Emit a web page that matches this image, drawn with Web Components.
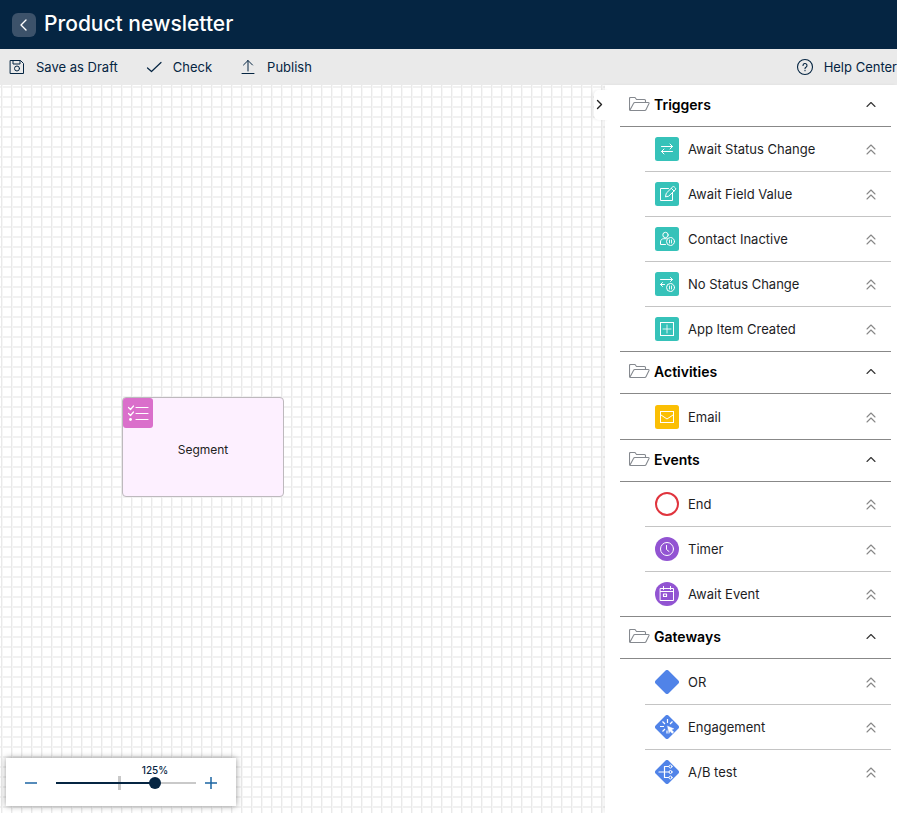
<!DOCTYPE html>
<html lang="en">
<head>
<meta charset="utf-8">
<title>Product newsletter</title>
<style>
html,body{height:100%}
body{margin:0;font:14px/20px Inter,"Liberation Sans",sans-serif;color:#1d1d1f;overflow:hidden}
</style>
</head>
<body>
<journey-editor>
  <title-bar slot="top">Product newsletter</title-bar>
  <tool-bar slot="top">
    <tool-button icon="save">Save as Draft</tool-button>
    <tool-button icon="check">Check</tool-button>
    <tool-button icon="publish">Publish</tool-button>
    <tool-button icon="help" slot="end">Help Center</tool-button>
  </tool-bar>
  <flow-canvas slot="canvas">
    <flow-node style="left:122px;top:312px">Segment</flow-node>
    <zoom-control slot="tools"></zoom-control>
  </flow-canvas>
  <side-panel slot="panel">
    <palette-group label="Triggers">
      <palette-item icon="status">Await Status Change</palette-item>
      <palette-item icon="field">Await Field Value</palette-item>
      <palette-item icon="inactive">Contact Inactive</palette-item>
      <palette-item icon="nostatus">No Status Change</palette-item>
      <palette-item icon="created">App Item Created</palette-item>
    </palette-group>
    <palette-group label="Activities" roomy>
      <palette-item icon="email">Email</palette-item>
    </palette-group>
    <palette-group label="Events">
      <palette-item icon="end">End</palette-item>
      <palette-item icon="timer">Timer</palette-item>
      <palette-item icon="event">Await Event</palette-item>
    </palette-group>
    <palette-group label="Gateways" roomy>
      <palette-item icon="or">OR</palette-item>
      <palette-item icon="engagement">Engagement</palette-item>
      <palette-item icon="ab">A/B test</palette-item>
    </palette-group>
  </side-panel>
</journey-editor>
<script>
const svg = (w, h, body, extra = '') =>
  `<svg width="${w}" height="${h}" viewBox="0 0 ${w} ${h}" fill="none" stroke-linecap="round" stroke-linejoin="round" aria-hidden="true" ${extra}>${body}</svg>`;

const tile = (fill, body) => svg(24, 24, `<rect width="24" height="24" rx="2.5" fill="${fill}"/><g stroke="#fff">${body}</g>`);
const disc = body => svg(24, 24, `<circle cx="12" cy="12" r="12" fill="#9254d2"/><g stroke="#fff">${body}</g>`);
const diamond = body => svg(24, 24, `<path d="M10.300.8a2.400 2.400 0 0 1 3.400 0l9.500 9.500a2.400 2.400 0 0 1 0 3.400l-9.500 9.500a2.400 2.400 0 0 1-3.400 0L.8 13.700a2.400 2.400 0 0 1 0-3.400z" fill="#5083e8"/><g stroke="#fff">${body}</g>`);
const TEAL = '#36c2b9';

const itemIcons = {
  status: tile(TEAL, '<path d="M6.500 9.500h11M15 7l2.500 2.500L15 12M17.500 14.500h-11M9 12l-2.500 2.500L9 17"/>'),
  field: tile(TEAL, '<path d="M13.500 6.500h-8v12h12v-7.500M10.500 14.500l.8-3.300 6.200-6.200a1.300 1.300 0 0 1 1.900 0l.9.9a1.300 1.300 0 0 1 0 1.900l-6.300 6.100zM16.500 6.500l2.500 2.500"/>'),
  inactive: tile(TEAL, '<circle cx="10.500" cy="8" r="2.700"/><path d="M10.500 17.500h-5v-2.500c0-2 1.300-3.300 3.300-3.300h2.500"/><circle cx="15.500" cy="14.500" r="4"/><path d="M14.500 13v3M16.500 13v3" stroke-width=".9"/>'),
  nostatus: tile(TEAL, '<path d="M5.500 7.500h12M15.500 5.500l2 2-2 2M9.500 12.500h-4M7.500 10.500l-2 2 2 2"/><circle cx="15.500" cy="15.500" r="4"/><path d="M14.500 14v3M16.500 14v3" stroke-width=".9"/>'),
  created: tile(TEAL, '<rect x="5.500" y="5.500" width="13" height="13" stroke-linejoin="miter"/><path d="M12 8v8M8 12h8" opacity=".8"/>'),
  email: tile('#fbbf04', '<rect x="5.500" y="6.500" width="13" height="11" stroke-linejoin="miter"/><path d="M6 10l6 4 6-4"/>'),
  end: svg(24, 24, '<circle cx="12" cy="12" r="11" stroke="#e0343d" stroke-width="2"/>'),
  timer: disc('<circle cx="12" cy="12" r="6.500"/><path d="M11.500 8.500v4l2.500 2"/>'),
  event: disc('<path d="M5.500 6.500h13v12h-13zM5.500 9.500h13M8.500 4.500v3M15.500 4.500v3" stroke-linejoin="miter"/><path d="M8.500 12h3v2.500h-3z" stroke-width="1.200"/>'),
  or: diamond(''),
  engagement: diamond('<path d="M12.500 4v4M7.500 6.500l2.500 2.500M5 11.500h4M7.500 16.500l2.500-2.500M17.500 6.500L15 9M12 15.500v3" stroke-linecap="butt" stroke-width="1.200"/><path d="M12.500 11l6.500 2.800-2.400 1 2.200 2.300-1.600 1.500-2.200-2.400-1 2.200z" fill="#fff" stroke-width=".3"/>'),
  ab: diamond('<path d="M4 12h10M13.500 6.500H9.500v11h4" stroke-width="1.200"/><circle cx="15.500" cy="6.500" r="1.500"/><circle cx="15.500" cy="12" r="1.500"/><circle cx="15.500" cy="17.500" r="1.500"/>')
};

const toolIcons = {
  save: svg(20, 20, '<path d="M3.500 3.500h10l3 3v10h-13zM6 3.500v3.500h7v-3.500"/><circle cx="10" cy="11.500" r="2.500"/>'),
  check: svg(20, 20, '<path d="M3.500 11l4 3.500 9.500-9"/>', 'stroke-width="1.200"'),
  publish: svg(20, 20, '<path d="M10 14V3.500M5.500 8L10 3.500 14.500 8M4 16.500h12"/>'),
  help: svg(20, 20, '<circle cx="10" cy="10" r="7.500"/><path d="M8 8.500a2 2 0 1 1 3 1.700c-.7.400-1 .7-1 1.400M10 13.300v.4"/>', 'stroke-width="1.100"')
};

class Part extends HTMLElement {
  connectedCallback() {
    if (this.shadowRoot) return;
    const root = this.attachShadow({mode: 'open'});
    root.innerHTML = `<style>*{box-sizing:border-box}button{font:inherit;color:inherit;background:none;border:0;padding:0;margin:0;cursor:pointer}svg{display:block;flex:none}${this.css()}</style>${this.html()}`;
  }
}

customElements.define('journey-editor', class extends Part {
  css() { return `:host{display:flex;flex-direction:column;height:100vh}
    main{flex:1;min-height:0;display:flex}`; }
  html() { return `<slot name="top"></slot><main><slot name="canvas"></slot><slot name="panel"></slot></main>`; }
});

customElements.define('title-bar', class extends Part {
  css() { return `:host{display:block;flex:none;background:#052542;color:#fff}
    header{display:flex;align-items:center;gap:8px;padding:0 12px;height:49px}
    button{width:24px;height:24px;border-radius:6px;background:#3c526a}
    h1{margin:0;padding-bottom:1px;font-size:21px;line-height:28px;font-weight:500}`; }
  html() { return `<header><button aria-label="Back">${svg(24, 24, '<path d="M14 7L9 12l5 5" stroke="#fff" stroke-width="1.400"/>')}</button><h1><slot></slot></h1></header>`; }
});

customElements.define('tool-bar', class extends Part {
  css() { return `:host{display:block;flex:none;background:#eaeaea;color:#052542}
    nav{display:flex;justify-content:space-between;height:36px;padding-left:7px}
    div{display:flex;gap:26px}`; }
  html() { return `<nav aria-label="Actions"><div><slot></slot></div><slot name="end"></slot></nav>`; }
});

customElements.define('tool-button', class extends Part {
  css() { return `:host{display:flex;font-size:13px}
    button{display:flex;align-items:center;gap:9px;white-space:nowrap}
    svg{stroke:#052542}`; }
  html() { return `<button>${toolIcons[this.getAttribute('icon')]}<span><slot></slot></span></button>`; }
});

customElements.define('flow-canvas', class extends Part {
  css() { return `:host{display:block;flex:1;min-width:0;position:relative;overflow:hidden;
      background:linear-gradient(90deg,transparent 1px,#e9e9e9 1px 2px,#f6f6f6 2px 3px,transparent 3px) 0 0/10px 10px,linear-gradient(transparent 1px,#f1f1f1 1px 3px,transparent 3px) 0 0/10px 10px,#fff}
    .tools{position:absolute;left:6px;bottom:7px}`; }
  html() { return `<slot></slot><div class="tools"><slot name="tools"></slot></div>`; }
});

customElements.define('flow-node', class extends Part {
  css() { return `:host{position:absolute;width:162px;height:100px;display:flex;align-items:center;justify-content:center;
      box-sizing:border-box;padding-top:6px;border:1px solid #bdb9bd;border-radius:4px;background:#fdf0ff;font-size:12px;color:#222}
    svg{position:absolute;left:0;top:0}`; }
  html() { return svg(30, 30, '<rect width="30" height="30" rx="3" fill="#da6fcb"/><g stroke="#fff" stroke-width="1.200"><path d="M5.500 9.500l2 2 3-3.500M5.500 15.500l2 2 3-3.500M13 9.500h12M13 15.500h12M13 21.500h12"/></g><circle cx="7.500" cy="21.500" r="1.400" fill="#fff"/>') + '<slot></slot>'; }
});

customElements.define('zoom-control', class extends Part {
  css() { return `:host{display:flex;align-items:center;gap:8px;box-sizing:border-box;width:230px;height:48px;padding:1px 18px 0;background:#fff;box-shadow:0 0 6px rgba(0,0,0,.4);color:#052542}
    .track{position:relative;width:140px;height:24px;margin-left:auto}
    input{-webkit-appearance:none;appearance:none;display:block;width:100%;height:24px;margin:0;background:linear-gradient(90deg,#052542 99px,#c9c9c9 99px) 0 50%/100% 2px no-repeat,linear-gradient(#c9c9c9,#c9c9c9) 62px 50%/3px 14px no-repeat}
    input::-webkit-slider-thumb{-webkit-appearance:none;width:12px;height:12px;border-radius:50%;background:#052542}
    output{position:absolute;left:99px;bottom:18px;transform:translateX(-50%);font-size:10px;line-height:14px;font-weight:500}
    svg{stroke:#1c65a3;stroke-width:1.500;stroke-linecap:butt}`; }
  html() { return `<button aria-label="Zoom out">${svg(14, 14, '<path d="M1 7h12"/>')}</button>
    <div class="track"><output for="zoom">125%</output><input id="zoom" type="range" aria-label="Zoom" min="0" max="128" value="93"></div>
    <button aria-label="Zoom in">${svg(14, 14, '<path d="M1 7h12M7 1v12"/>')}</button>`; }
});

customElements.define('side-panel', class extends Part {
  css() { return `:host{display:block;position:relative;flex:none;width:292px;box-sizing:border-box;padding:0 6px 0 15px;background:#fff;box-shadow:-2px 0 3px rgba(0,0,0,.06)}
    .toggle{position:absolute;left:-11px;top:5px;width:15px;height:30px;border-radius:5px 0 0 5px;background:#fff;box-shadow:-2px 0 3px rgba(0,0,0,.06)}`; }
  html() { return `<button class="toggle" aria-label="Hide panel">${svg(12, 30, '<path d="M3.500 10.500L7.500 14.500l-4 4" stroke="#222" stroke-width="1.400"/>')}</button><slot></slot>`; }
});

customElements.define('palette-group', class extends Part {
  css() { return `:host{display:block}
    :host(:not(:last-child)){border-bottom:1px solid #888}
    h2{margin:0;font-size:14px;font-weight:600;color:#000;border-bottom:1px solid #888}
    button{display:flex;align-items:center;width:100%;height:41px;padding:0 14px 2px 9px;gap:4px;text-align:left}
    span{flex:1}
    .list{display:block;padding-left:25px}
    :host([roomy]) .list{padding-top:1px}`; }
  html() { const label = this.getAttribute('label');
    return `<h2><button aria-expanded="true">${svg(21, 16, '<path d="M.5 12.500v-11q0-1 1-1h4.500l1.500 2h8q1 0 1 1v2M1 13L4.500 6.500q.4-1 1.400-1H19.300q1 0 .7 1l-2.900 6q-.4 1-1.400 1H1.500q-1 0-1-1" stroke="#85898f" stroke-width="1.100"/>')}<span>${label}</span>${svg(12, 12, '<path d="M2 7.500l4-4 4 4" stroke="#333" stroke-width="1.100"/>')}</button></h2><div class="list"><slot></slot></div>`; }
});

customElements.define('palette-item', class extends Part {
  css() { return `:host{display:flex;align-items:center;gap:9px;height:44px;padding:0 14px 0 10px;font-size:13px}
    :host(:not(:last-child)){border-bottom:1px solid #c4c4c4}
    span{flex:1}`; }
  html() { return `${itemIcons[this.getAttribute('icon')]}<span><slot></slot></span><button aria-label="Move up">${svg(12, 12, '<path d="M2 6l4-4 4 4M2 11l4-4 4 4" stroke="#888" stroke-width="1.100"/>')}</button>`; }
});
</script>
</body>
</html>
